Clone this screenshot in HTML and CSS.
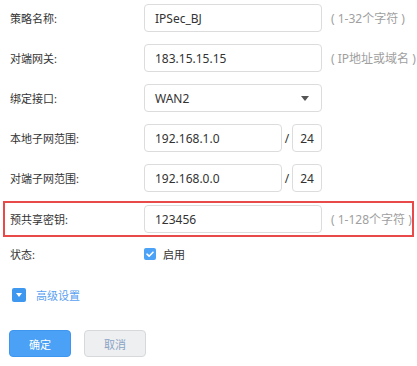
FILE: index.html
```html
<!DOCTYPE html>
<html lang="zh-CN">
<head>
    <meta charset="UTF-8">
    <title>IPSec 策略</title>
    <link rel="stylesheet" href="styles.css">
</head>
<body>
    <div class="panel">
        <div class="row">
            <label class="label">策略名称:</label>
            <input class="field" type="text" value="IPSec_BJ">
            <span class="hint">( 1-32个字符 )</span>
        </div>
        <div class="row">
            <label class="label">对端网关:</label>
            <input class="field" type="text" value="183.15.15.15">
            <span class="hint">( IP地址或域名 )</span>
        </div>
        <div class="row">
            <label class="label">绑定接口:</label>
            <div class="field select">
                <span>WAN2</span>
                <span class="caret"></span>
            </div>
        </div>
        <div class="row">
            <label class="label">本地子网范围:</label>
            <input class="field short" type="text" value="192.168.1.0">
            <span class="slash">/</span>
            <input class="field mask" type="text" value="24">
        </div>
        <div class="row">
            <label class="label">对端子网范围:</label>
            <input class="field short" type="text" value="192.168.0.0">
            <span class="slash">/</span>
            <input class="field mask" type="text" value="24">
        </div>
        <div class="row highlight">
            <label class="label">预共享密钥:</label>
            <input class="field" type="text" value="123456">
            <span class="hint">( 1-128个字符 )</span>
        </div>
        <div class="row status">
            <label class="label">状态:</label>
            <span class="check">
                <svg width="12" height="12" viewBox="0 0 12 12"><path d="M3 6.2 L5.1 8.2 L9 4.2" fill="none" stroke="#fff" stroke-width="1.6" stroke-linecap="round" stroke-linejoin="round"/></svg>
            </span>
            <span class="check-text">启用</span>
        </div>
        <div class="advanced">
            <span class="toggle"><span class="toggle-arrow"></span></span>
            <a href="#" class="adv-link">高级设置</a>
        </div>
        <div class="buttons">
            <button class="btn ok">确定</button>
            <button class="btn cancel">取消</button>
        </div>
    </div>
</body>
</html>
```

FILE: styles.css
```css
body {
    margin: 0;
    background-color: #fff;
    font-family: "Noto Sans", "Noto Sans CJK SC", sans-serif;
    font-size: 11px;
    color: #333;
}
.panel {
    padding-top: 4px;
}
.row {
    display: flex;
    align-items: center;
    height: 28px;
    margin: 0 0 12px 0;
}
.label {
    width: 134px;
    padding-left: 10px;
    flex-shrink: 0;
}
.field {
    box-sizing: border-box;
    width: 178px;
    height: 28px;
    padding: 0 10px;
    border: 1px solid #dcdcdc;
    border-radius: 4px;
    background-color: #fff;
    font-family: "Noto Sans", "Noto Sans CJK SC", sans-serif;
    font-size: 12px;
    color: #333;
    outline: none;
}
.field.short {
    width: 138px;
}
.field.mask {
    width: 30px;
    padding: 0;
    text-align: center;
}
.slash {
    width: 10px;
    text-align: center;
    font-size: 12px;
}
.select {
    display: flex;
    align-items: center;
    justify-content: space-between;
}
.caret {
    width: 0;
    height: 0;
    border-left: 4px solid transparent;
    border-right: 4px solid transparent;
    border-top: 5px solid #555;
    margin-right: 2px;
}
.hint {
    margin-left: 9px;
    color: #a0a0a0;
    font-size: 12px;
}
.highlight {
    box-sizing: content-box;
    margin: -3px 3px 11px 3px;
    padding: 2px 0;
    border: 2px solid #e84a4a;
}
.highlight .label {
    padding-left: 5px;
}
.status {
    height: 12px;
    align-items: center;
    margin-top: 11px;
    margin-bottom: 0;
}
.check {
    display: flex;
    width: 12px;
    height: 12px;
    border-radius: 2px;
    background-color: #4ba2f7;
}
.check-text {
    margin-left: 7px;
}
.advanced {
    display: flex;
    align-items: center;
    margin-top: 27px;
    padding-left: 12px;
}
.toggle {
    display: flex;
    align-items: center;
    justify-content: center;
    width: 14px;
    height: 14px;
    border-radius: 2px;
    background-color: #3f98f0;
}
.toggle-arrow {
    width: 0;
    height: 0;
    border-left: 3px solid transparent;
    border-right: 3px solid transparent;
    border-top: 4px solid #fff;
}
.adv-link {
    margin-left: 10px;
    color: #5a9ff0;
    text-decoration: none;
}
.buttons {
    display: flex;
    gap: 13px;
    margin-top: 27px;
    padding-left: 9px;
}
.btn {
    width: 62px;
    height: 27px;
    border-radius: 4px;
    font-family: "Noto Sans", "Noto Sans CJK SC", sans-serif;
    font-size: 11px;
    cursor: pointer;
}
.ok {
    background-color: #4ba1f6;
    border: 1px solid #3f96ee;
    color: #fff;
}
.cancel {
    background-color: #eeeff1;
    border: 1px solid #d6d8db;
    color: #8aa3c4;
}
```
